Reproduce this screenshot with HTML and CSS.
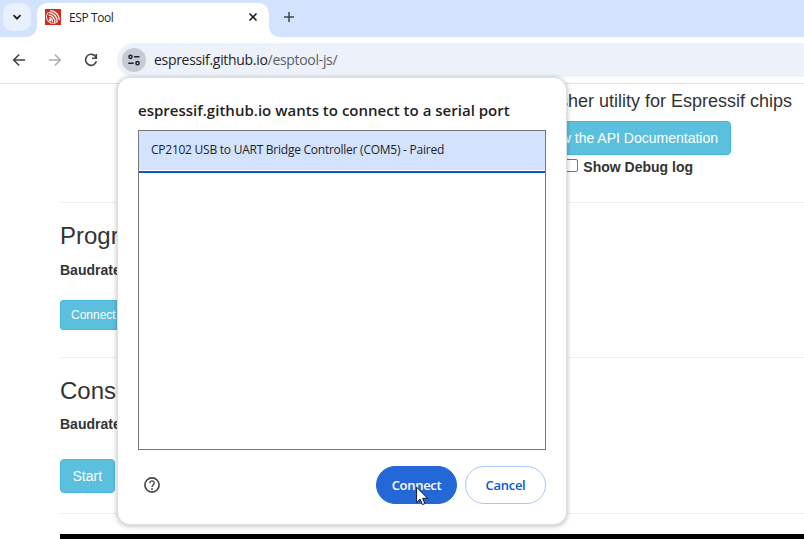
FILE: index.html
```html
<!DOCTYPE html>
<html lang="en">
<head>
<meta charset="utf-8">
<title>ESP Tool</title>
<link rel="stylesheet" href="styles.css">
</head>
<body>
<div class="browser">
  <header class="tabstrip">
    <div class="tab-search"><svg width="12" height="12" viewBox="0 0 12 12"><path d="M2.500 4.200 6 7.700l3.500-3.500" fill="none" stroke="#1f1f1f" stroke-width="1.800"/></svg></div>
    <div class="tab">
      <svg class="favicon" width="16" height="16" viewBox="0 0 16 16"><rect width="16" height="16" fill="#d22c20"/><g fill="none" stroke="#fff" stroke-width="1.250"><path d="M5.200 1.600A9.500 9.500 0 0 1 14.300 11"/><path d="M3.700 3.700A8.500 8.500 0 0 1 12.200 13"/><path d="M3.600 6.200A6.200 6.200 0 0 1 9.700 13.600"/><path d="M4.200 8.600A3.800 3.800 0 0 1 7.400 12.800"/><path d="M3.200 3.300A6.500 6.500 0 0 0 8 14.300 6 6 0 0 0 12 13.200" stroke-width=".9"/></g><circle cx="5" cy="11.300" r="1.200" fill="#fff"/></svg>
      <span class="tab-title">ESP Tool</span>
      <svg class="tab-close" width="10" height="10" viewBox="0 0 10 10"><path d="m1.500 1.500 7 7m0-7-7 7" stroke="#1f1f1f" stroke-width="1.600"/></svg>
    </div>
    <svg class="new-tab" width="12" height="12" viewBox="0 0 12 12"><path d="M6 1v10M1 6h10" stroke="#41464e" stroke-width="1.500"/></svg>
  </header>
  <nav class="toolbar">
    <svg width="14" height="14" viewBox="0 0 14 14"><path d="M13.200 7H2M7.200 1.500 1.700 7l5.500 5.500" fill="none" stroke="#41464a" stroke-width="1.600"/></svg>
    <svg class="forward" width="14" height="14" viewBox="0 0 14 14"><path d="M.8 7H12M6.800 1.500 12.300 7l-5.500 5.500" fill="none" stroke="#adadad" stroke-width="1.600"/></svg>
    <svg class="reload" width="14" height="14" viewBox="0 0 14 14"><path d="M12 4.300A5.500 5.500 0 1 0 12.400 8.300" fill="none" stroke="#41464a" stroke-width="1.600"/><path d="M12.300.9v4.400H8" fill="none" stroke="#41464a" stroke-width="1.600"/></svg>
    <div class="omnibox">
      <span class="site-info"><svg width="14" height="14" viewBox="0 0 14 14"><g fill="none" stroke="#202124" stroke-width="1.500"><circle cx="3.500" cy="3.800" r="1.600"/><path d="M7 3.800h5.500M1.200 10.200h5.500"/><circle cx="10.500" cy="10.200" r="1.600"/></g></svg></span>
      <span class="url">espressif.github.io<span class="path">/esptool-js/</span></span>
    </div>
  </nav>
  <main class="page">
    <div class="intro">
      <h4>A Serial Flasher utility for Espressif chips</h4>
      <button class="btn api">View the API Documentation</button>
      <label class="debug"><span class="box"></span>Show Debug log</label>
    </div>
    <section class="program">
      <h3>Program</h3>
      <p class="label">Baudrate:</p>
      <button class="btn small">Connect</button>
    </section>
    <section class="console">
      <h3>Console</h3>
      <p class="label">Baudrate:</p>
      <button class="btn">Start</button>
    </section>
    <div class="terminal-wrap"><div class="terminal"></div></div>
  </main>
</div>
<div class="dialog">
  <h2><span>espressif.github.io wants to connect to a serial port</span></h2>
  <div class="ports"><div class="port"><span>CP2102 USB to UART Bridge Controller (COM5) - Paired</span></div></div>
  <footer>
    <svg class="help" width="18" height="18" viewBox="0 0 18 18"><circle cx="9" cy="9" r="7.100" fill="none" stroke="#45474a" stroke-width="1.700"/><path d="M6.800 7.200a2.200 2.200 0 1 1 3.500 1.700C9.500 9.500 9 9.800 9 10.900" fill="none" stroke="#45474a" stroke-width="1.400"/><circle cx="9" cy="13" r=".95" fill="#45474a"/></svg>
    <button class="pill primary">Connect</button>
    <button class="pill">Cancel</button>
  </footer>
</div>
<svg class="cursor" width="13" height="21" viewBox="0 0 13 21"><path d="M.6 1.200v15.300l3.500-3.400 2.300 5.500 2.500-1-2.300-5.300h5Z" fill="#fff" stroke="#111827" stroke-width="1"/></svg>
</body>
</html>
```
FILE: styles.css
```css
* { box-sizing: border-box; }
body { margin: 0; height: 539px; overflow: hidden; background: #fff; color: #333; font: 14px/20px "Liberation Sans", Arial, sans-serif; }
button { font-family: inherit; display: block; }
svg { flex: none; display: block; }
h2, h3, h4, p { margin: 0; }
.browser { height: 539px; display: flex; flex-direction: column; }
.tabstrip { height: 37px; flex: none; background: #d3e2fd; display: flex; align-items: flex-start; padding: 3px 0 0 3px; }
.tab-search { width: 28px; height: 28px; border-radius: 10px; background: #eaf1fe; display: grid; place-items: center; }
.tab { position: relative; width: 232px; height: 34px; margin-left: 6px; background: #fff; border-radius: 10px 10px 0 0; display: flex; align-items: center; padding: 0 11px 6px 8px; }
.tab::before, .tab::after { content: ""; position: absolute; bottom: 0; width: 10px; height: 10px; }
.tab::before { left: -10px; background: radial-gradient(circle at 0 0, transparent 9.5px, #fff 10px); }
.tab::after { right: -10px; background: radial-gradient(circle at 100% 0, transparent 9.5px, #fff 10px); }
.tab-title { margin-left: 8px; font: 12px/16px "Open Sans", sans-serif; letter-spacing: -.4px; color: #1f1f1f; padding-top: 1px; }
.tab-close { margin-left: auto; }
.new-tab { margin: 8px 0 0 14px; }
.toolbar { height: 47px; flex: none; background: #fff; border-bottom: 1px solid #dfe1e5; display: flex; align-items: center; padding: 0 0 0 12px; }
.forward { margin-left: 22px; }
.reload { margin-left: 22px; }
.omnibox { flex: 1; height: 34px; margin-left: 19px; border-radius: 17px 0 0 17px; background: #ecf1fa; display: flex; align-items: center; padding-left: 5px; }
.site-info { width: 24px; height: 24px; border-radius: 50%; background: #c6cbd6; display: grid; place-items: center; }
.url { margin-left: 8px; font: 14px/20px "Open Sans", sans-serif; letter-spacing: -.31px; color: #1f1f1f; }
.path { color: #5b5e63; }
.page { flex: 1; padding-left: 60px; overflow: hidden; }
.intro { height: 119px; padding-top: 7px; border-bottom: 1px solid #eee; display: flex; flex-direction: column; align-items: flex-end; }
h4 { font-size: 18px; line-height: 20px; font-weight: 400; margin-right: 12px; }
.btn { height: 34px; padding: 0 12px; border: 1px solid #46b8da; border-radius: 4px; background: #5bc0de; color: #fff; font-size: 14px; line-height: 20px; }
.api { margin: 10px 73px 0 0; }
.debug { display: flex; align-items: center; gap: 5px; margin: 2px 111px 0 0; font-weight: 700; }
.box { width: 13px; height: 13px; border: 1px solid #767676; border-radius: 2px; margin-top: -3px; }
h3 { font-size: 24px; line-height: 26px; font-weight: 400; }
.label { font-weight: 700; }
.program { height: 155px; padding-top: 20px; border-bottom: 1px solid #eee; }
.program .label { margin-top: 11px; }
.small { height: 30px; padding: 0 10px; font-size: 12px; border-radius: 3px; margin-top: 20px; }
.console { height: 156px; padding-top: 20px; border-bottom: 1px solid #eee; }
.console .label { margin-top: 10px; }
.console .btn { margin-top: 25px; padding: 0 11.5px; }
.terminal-wrap { padding-top: 20px; }
.terminal { height: 6px; background: #000; }
.dialog { position: absolute; left: 117px; top: 77px; width: 450px; height: 448px; padding: 21px 20px 20px; background: #fff; border: 1px solid #dedfe0; border-radius: 13px; box-shadow: 0 1px 4px 1px rgba(0,0,0,.2); display: flex; flex-direction: column; font-family: "Open Sans", sans-serif; color: #1f1f1f; }
h2 { font-size: 15px; line-height: 22px; font-weight: 600; white-space: nowrap; letter-spacing: .015px; }
.ports { height: 320px; margin-top: 9px; border: 1px solid #767676; }
.port { height: 42px; background: linear-gradient(#d3e3fd 39px, #fff 39px); border-bottom: 2px solid #0b57d0; padding: 9px 12px 0; font-size: 12px; line-height: 20px; white-space: nowrap; letter-spacing: -.25px; }
footer { display: flex; align-items: center; margin-top: 16px; }
.help { margin-left: 5px; margin-right: auto; }
.pill { width: 81px; height: 38px; border: 1px solid #a8c7fa; border-radius: 19px; background: #fff; color: #0b57d0; font-size: 13px; font-weight: 600; letter-spacing: -.3px; padding: 0; margin-left: 8px; }
.primary { background: #2368d6; border-color: #2368d6; color: #fff; }
.cursor { position: absolute; left: 416px; top: 486px; }
```
